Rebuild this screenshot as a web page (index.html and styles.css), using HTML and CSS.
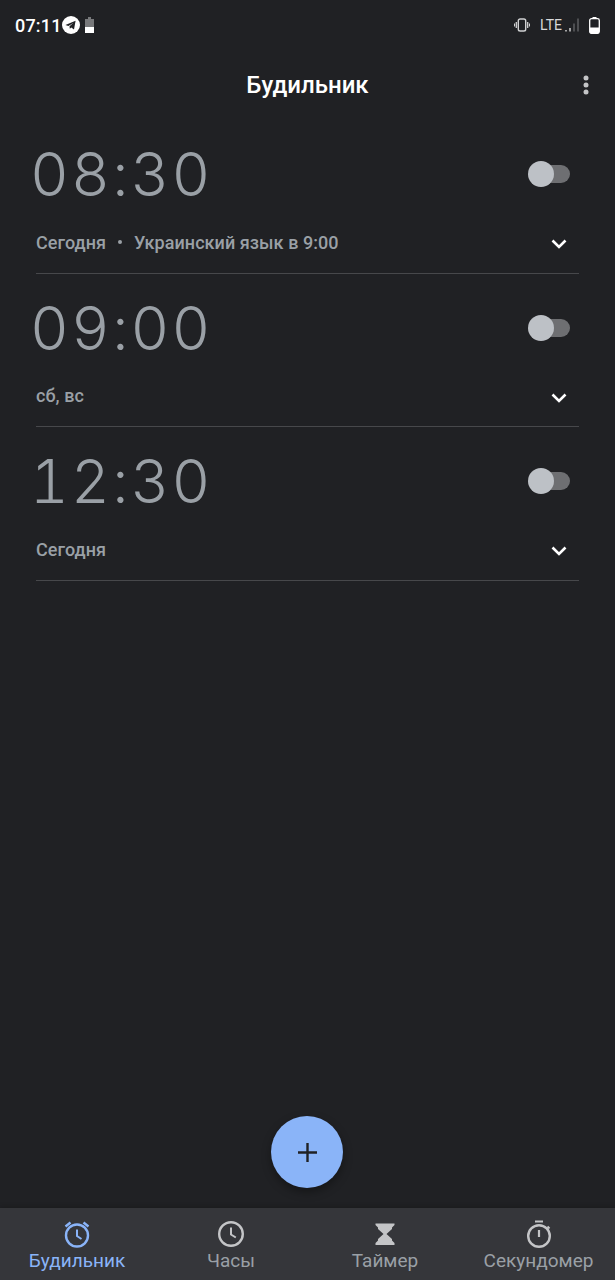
FILE: index.html
```html
<!DOCTYPE html>
<html lang="ru">
<head>
<meta charset="utf-8">
<title>Будильник</title>
<link rel="stylesheet" href="styles.css">
</head>
<body>
<div class="screen">
  <div class="status">
    <div class="status-left">
      <span class="clock">07:11</span>
      <svg class="ic-tg" width="18" height="18" viewBox="0 0 18 18"><circle cx="9" cy="9" r="9" fill="#fff"/><path d="M3.4 8.9 13.6 4.800 12 13.400 9.300 11.400 7.800 12.800 7.500 10.300 11.600 6.700 6.400 9.900Z" fill="#202124"/></svg>
      <svg class="ic-batt" width="9" height="17" viewBox="0 0 9 17"><rect x="3" y="0" width="3" height="2" fill="#77787a"/><rect x="0" y="2" width="9" height="8" fill="#77787a"/><rect x="0" y="10" width="9" height="6" fill="#fff"/></svg>
    </div>
    <div class="status-right">
      <svg width="16" height="14" viewBox="0 0 16 14"><rect x="4.300" y="1" width="7.400" height="12" rx="1.800" fill="none" stroke="#d0d1d2" stroke-width="1.400"/><path d="M2.300 4v6M13.700 4v6" stroke="#d0d1d2" stroke-width="1.300"/><path d="M.5 5.500v3M15.500 5.500v3" stroke="#d0d1d2"/></svg>
      <span class="lte">LTE</span>
      <svg class="ic-sig" width="14" height="14" viewBox="0 0 14 14"><path d="M1 12v1.500M5 10v3.500" stroke="#e8e8e8" stroke-width="1.300"/><path d="M9 5.500v8M13 .5v13" stroke="#66676a" stroke-width="1.300"/></svg>
      <svg class="ic-phone" width="11" height="17" viewBox="0 0 11 17"><rect x=".7" y="1.700" width="9.600" height="14.600" rx="1.800" fill="none" stroke="#fff" stroke-width="1.300"/><rect x="3.500" y="0" width="4" height="2" fill="#fff"/><path d="M1 10.500h9v5a1 1 0 0 1-1 1H2a1 1 0 0 1-1-1Z" fill="#fff"/></svg>
    </div>
  </div>

  <header class="appbar">
    <h1 class="title">Будильник</h1>
    <svg class="more" width="6" height="20" viewBox="0 0 6 20"><circle cx="3" cy="3" r="2.500"/><circle cx="3" cy="10" r="2.500"/><circle cx="3" cy="17" r="2.500"/></svg>
  </header>

  <main class="list">
    <section class="alarm">
      <div class="alarm-top">
        <span class="time">08:30</span>
        <span class="switch"><span class="knob"></span></span>
      </div>
      <div class="alarm-sub">
        <span class="sub-text">Сегодня<span class="dot"></span>Украинский язык в 9:00</span>
        <svg class="chev" width="16" height="10" viewBox="0 0 16 10"><path d="M1.500 1.500 8 8l6.500-6.500" fill="none" stroke="#fff" stroke-width="2.600"/></svg>
      </div>
    </section>
    <section class="alarm">
      <div class="alarm-top">
        <span class="time">09:00</span>
        <span class="switch"><span class="knob"></span></span>
      </div>
      <div class="alarm-sub">
        <span class="sub-text">сб, вс</span>
        <svg class="chev" width="16" height="10" viewBox="0 0 16 10"><path d="M1.500 1.500 8 8l6.500-6.500" fill="none" stroke="#fff" stroke-width="2.600"/></svg>
      </div>
    </section>
    <section class="alarm">
      <div class="alarm-top">
        <span class="time">12:30</span>
        <span class="switch"><span class="knob"></span></span>
      </div>
      <div class="alarm-sub">
        <span class="sub-text">Сегодня</span>
        <svg class="chev" width="16" height="10" viewBox="0 0 16 10"><path d="M1.500 1.500 8 8l6.500-6.500" fill="none" stroke="#fff" stroke-width="2.600"/></svg>
      </div>
    </section>
  </main>

  <button class="fab" aria-label="Добавить">
    <svg width="19" height="19" viewBox="0 0 19 19"><path d="M9.500 0v19M0 9.500h19" stroke="#202124" stroke-width="2.400"/></svg>
  </button>

  <nav class="nav">
    <div class="tab active">
      <svg width="28" height="28" viewBox="0 0 28 28" fill="none" stroke="#8ab4f8"><circle cx="14" cy="15.500" r="11" stroke-width="2.400"/><path d="M14 9.500V16l4.500 3" stroke-width="2"/><path d="M2.500 6.500 7.500 2.500M25.500 6.500 20.500 2.500" stroke-width="2.400"/></svg>
      <span class="tab-label">Будильник</span>
    </div>
    <div class="tab">
      <svg width="28" height="28" viewBox="0 0 28 28" fill="none" stroke="#c4c5c7"><circle cx="14" cy="14" r="11.800" stroke-width="2.400"/><path d="M14 7.500V14.500l4.800 3" stroke-width="2"/></svg>
      <span class="tab-label">Часы</span>
    </div>
    <div class="tab">
      <svg width="28" height="28" viewBox="0 0 28 28" fill="#c4c5c7"><path d="M4.500 3.500h19v1.500l-2.500 2.500v1.500L15.500 14 21 19v1.500l2.500 2.500v2h-19v-2L7 20.500V19l5.500-5L7 9V7.500L4.500 5Z"/></svg>
      <span class="tab-label">Таймер</span>
    </div>
    <div class="tab">
      <svg width="28" height="28" viewBox="0 0 28 28" fill="none" stroke="#c4c5c7"><circle cx="14" cy="16" r="10.800" stroke-width="2.400"/><path d="M10 1.500h8M14 10v7" stroke-width="2.200"/><path d="M22.500 6.500 24.500 8.500" stroke-width="2"/></svg>
      <span class="tab-label">Секундомер</span>
    </div>
  </nav>
</div>
</body>
</html>
```

FILE: styles.css
```css
* { box-sizing: border-box; }
html, body { margin: 0; padding: 0; }
body { background: #202124; font-family: Roboto, "Noto Sans", sans-serif; }

.screen {
  position: relative;
  width: 615px;
  height: 1280px;
  display: flex;
  flex-direction: column;
  background: #202124;
  overflow: hidden;
}

.status {
  height: 50px;
  padding: 0 15px 0 15px;
  display: flex;
  justify-content: space-between;
  align-items: center;
  color: #fff;
}
.status-left { display: flex; align-items: center; }
.clock { font-size: 18px; font-weight: 500; letter-spacing: 0.2px; }
.ic-batt { margin-left: 5px; }
.status-right { display: flex; align-items: center; }
.lte { font-size: 14px; color: #d8d9da; margin-left: 10px; }
.ic-sig { margin-left: 3px; }
.ic-phone { margin-left: 10px; }

.appbar {
  height: 70px;
  position: relative;
  display: flex;
  align-items: center;
  justify-content: center;
}
.title { margin: 0; font-size: 24px; font-weight: 500; color: #fff; }
.more { position: absolute; right: 26px; top: 25px; fill: #c4c5c7; }

.list { padding: 0 36px; display: flex; flex-direction: column; }
.alarm { height: 153.5px; border-bottom: 1px solid #47484b; display: flex; flex-direction: column; }
.alarm-top {
  height: 108px;
  display: flex;
  align-items: center;
  justify-content: space-between;
}
.time {
  font-family: Inter, Roboto, sans-serif;
  font-size: 60px;
  font-weight: 300;
  font-variant-numeric: tabular-nums;
  letter-spacing: 2.25px;
  color: #9aa0a6;
  margin-left: -6px;
  line-height: 1;
}
.switch {
  position: relative;
  width: 40px;
  height: 18px;
  margin-right: 9px;
  border-radius: 9px;
  background: #6e6f72;
}
.knob {
  position: absolute;
  left: -2px;
  top: -4px;
  width: 26px;
  height: 26px;
  border-radius: 50%;
  background: #bdc1c6;
}
.alarm-sub {
  display: flex;
  justify-content: space-between;
  align-items: center;
  padding-right: 12px;
  height: 28px;
}
.chev { margin-top: 4px; }
.sub-text { font-size: 18px; font-weight: 500; letter-spacing: 0.05px; color: #9aa0a6; display: flex; align-items: center; }
.dot { width: 4px; height: 4px; border-radius: 50%; background: #9aa0a6; margin: 0 12px; }

.fab {
  position: absolute;
  left: 271px;
  top: 1116px;
  width: 72px;
  height: 72px;
  border: 0;
  padding: 0;
  border-radius: 50%;
  background: #8ab4f8;
  box-shadow: 0 4px 10px rgba(0, 0, 0, 0.35);
  display: flex;
  align-items: center;
  justify-content: center;
}

.nav {
  position: absolute;
  left: 0;
  right: 0;
  bottom: 0;
  height: 72px;
  background: #35363a;
  display: grid;
  grid-template-columns: 154px 154px 154px 153px;
  box-shadow: 0 -2px 4px rgba(0, 0, 0, 0.15);
}
.tab { display: flex; flex-direction: column; align-items: center; padding-top: 12px; color: #9aa0a6; }
.tab.active { color: #8ab4f8; }
.tab-label { font-size: 19px; line-height: 24px; margin-top: 1px; white-space: nowrap; }
```
